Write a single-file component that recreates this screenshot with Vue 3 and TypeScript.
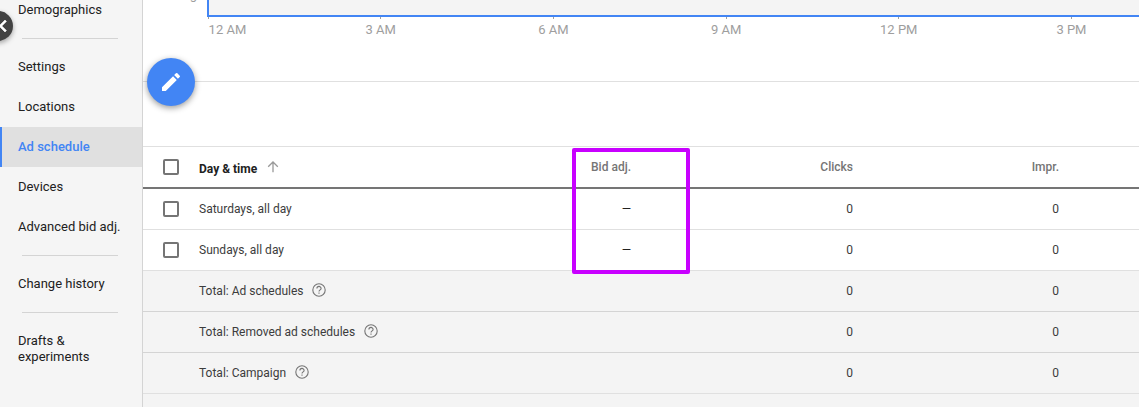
<script setup lang="ts">
interface Row {
  label: string
  bid: string
  total: boolean
}

const hours: string[] = ['12 AM', '3 AM', '6 AM', '9 AM', '12 PM', '3 PM']

const rows: Row[] = [
  { label: 'Saturdays, all day', bid: '—', total: false },
  { label: 'Sundays, all day', bid: '—', total: false },
  { label: 'Total: Ad schedules', bid: '', total: true },
  { label: 'Total: Removed ad schedules', bid: '', total: true },
  { label: 'Total: Campaign', bid: '', total: true },
]

const groups: string[][] = [
  ['Demographics'],
  ['Settings', 'Locations', 'Ad schedule', 'Devices', 'Advanced bid adj.'],
  ['Change history'],
  ['Drafts & experiments'],
]
</script>

<template>
  <div class="app">
    <nav class="side">
      <div v-for="(group, g) in groups" :key="g" class="group">
        <a v-for="item in group" :key="item" class="item" :class="{ active: item === 'Ad schedule' }">
          <span>{{ item }}</span>
        </a>
      </div>
    </nav>
    <button class="collapse" aria-label="Collapse">
      <svg width="24" height="24" viewBox="0 0 24 24"><path d="M15.41 7.41 14 6l-6 6 6 6 1.41-1.41L10.83 12z" fill="#fff" stroke="#fff" stroke-width=".6" /></svg>
    </button>

    <main class="main">
      <section class="chart">
        <div class="body">
          <div class="metric"><span>g</span></div>
          <div class="plot"></div>
        </div>
        <div class="axis">
          <div v-for="h in hours" :key="h" class="hour"><i></i><span>{{ h }}</span></div>
        </div>
      </section>
      <div class="toolbar"></div>

      <section class="table">
        <div class="row head">
          <div class="check"><i class="box"></i></div>
          <div class="name">
            <span>Day &amp; time</span>
            <svg class="arrow" width="12" height="12" viewBox="0 0 12 12"><path d="M6 11.3V1.4M1.2 5.8 6 1l4.8 4.8" fill="none" stroke="#999" stroke-width="1.3" /></svg>
          </div>
          <div class="bid">Bid adj.</div>
          <div class="clicks">Clicks</div>
          <div class="impr">Impr.</div>
        </div>
        <div v-for="row in rows" :key="row.label" class="row" :class="{ total: row.total }">
          <div class="check"><i v-if="!row.total" class="box"></i></div>
          <div class="name">
            <span>{{ row.label }}</span>
            <svg v-if="row.total" class="help" width="14" height="14" viewBox="0 0 14 14" fill="none" stroke="#757575"><circle cx="7" cy="7" r="6.2" stroke-width="1.1" /><path d="M4.9 5.5a2.1 2.1 0 0 1 4.2 0c0 1.4-2.1 1.5-2.1 3.1M7 9.6v1.2" stroke-width="1.1" /></svg>
          </div>
          <div class="bid dash">{{ row.bid }}</div>
          <div class="clicks">0</div>
          <div class="impr">0</div>
        </div>
      </section>
    </main>

    <button class="fab" aria-label="Edit">
      <svg width="24" height="24" viewBox="0 0 24 24"><path fill="#fff" d="M3 17.25V21h3.75L17.81 9.94l-3.75-3.75L3 17.25zM20.71 7.04a1 1 0 0 0 0-1.41l-2.34-2.34a1 1 0 0 0-1.41 0l-1.83 1.83 3.75 3.75 1.83-1.83z" /></svg>
    </button>
    <div class="highlight"></div>
  </div>
</template>

<style>
body {
  margin: 0;
  overflow: hidden;
}
</style>

<style scoped>
.app {
  position: relative;
  display: flex;
  width: 1139px;
  height: 407px;
  overflow: hidden;
  background: #fff;
  font-family: Roboto, sans-serif;
  color: #3c3c3c;
}
.side {
  flex: none;
  width: 142px;
  height: 407px;
  margin-top: -10px;
  padding-bottom: 10px;
  border-right: 1px solid #d4d4d4;
  background: #f5f5f5;
}
.group + .group::before {
  content: '';
  display: block;
  width: 96px;
  height: 1px;
  margin: 8px 0 8px 22px;
  background: #d4d4d4;
}
.item {
  display: flex;
  align-items: center;
  box-sizing: border-box;
  min-height: 40px;
  padding: 12px 18px 12px 18px;
  font-size: 13px;
  line-height: 16px;
  color: #212121;
}
.item.active {
  padding-left: 16px;
  border-left: 2px solid #4285f4;
  background: #e0e0e0;
  color: #4285f4;
  font-weight: 500;
}
.collapse,
.fab {
  position: absolute;
  display: flex;
  align-items: center;
  justify-content: center;
  padding: 0;
  border: 0;
  border-radius: 50%;
}
.collapse {
  left: -17px;
  top: 11px;
  width: 30px;
  height: 30px;
  background: #424242;
  box-shadow: 0 2px 5px rgba(0, 0, 0, 0.35);
}
.collapse svg {
  flex: none;
  margin-left: 10px;
}
.fab {
  left: 147px;
  top: 58px;
  width: 48px;
  height: 48px;
  background: #4285f4;
  box-shadow: 0 2px 6px rgba(0, 0, 0, 0.4);
}
.main {
  flex: 1;
  min-width: 0;
  overflow: hidden;
}
.chart {
  box-sizing: border-box;
  height: 82px;
  border-bottom: 1px solid #e0e0e0;
}
.body {
  display: flex;
  height: 17px;
}
.metric {
  width: 64px;
  text-align: right;
  font-size: 13px;
  line-height: 16px;
  color: #9e9e9e;
}
.metric span {
  display: block;
  margin: -13px 10px 0 0;
}
.plot {
  box-sizing: border-box;
  flex: 1;
  border-left: 2px solid #4285f4;
  border-bottom: 2px solid #4285f4;
  background: #f4f4f4;
}
.axis {
  display: flex;
  padding-left: 65px;
}
.hour {
  display: flex;
  flex: none;
  flex-direction: column;
  align-items: center;
  width: 172.7px;
  font-size: 13px;
  line-height: 16px;
  color: #9e9e9e;
}
.hour:first-child {
  align-items: flex-start;
  width: 86.35px;
}
.hour:first-child span {
  margin-left: 0.6px;
}
.hour i {
  width: 1px;
  height: 2px;
  margin-bottom: 3px;
  background: #9e9e9e;
}
.toolbar {
  height: 64px;
}
.row {
  display: grid;
  grid-template-columns: 56px 332px 100px 222px 206px;
  align-items: center;
  box-sizing: border-box;
  height: 41px;
  border-bottom: 1px solid #e0e0e0;
  font-size: 12px;
  line-height: 16px;
}
.head {
  height: 43px;
  border-top: 1px solid #e0e0e0;
  border-bottom: 2px solid #757575;
  color: #757575;
  font-weight: 500;
}
.row.total {
  border-bottom-color: #d4d4d4;
  background: #f4f4f4;
}
.row.total:last-child {
  border-bottom-color: #e0e0e0;
}
.table {
  height: 261px;
  background: #f4f4f4;
}
.row:not(.total) {
  background: #fff;
}
.check {
  display: flex;
  padding-left: 20px;
}
.box {
  box-sizing: border-box;
  width: 16px;
  height: 16px;
  border: 2px solid #757575;
  border-radius: 2px;
}
.name {
  display: flex;
  align-items: center;
}
.head .name {
  padding-top: 3px;
  color: #212121;
  font-weight: 700;
}
.arrow {
  margin: -3px 0 0 10px;
}
.help {
  margin: -2px 0 0 8.6px;
}
.bid,
.clicks,
.impr {
  text-align: right;
}
.dash {
  color: #212121;
}
.highlight {
  position: absolute;
  box-sizing: border-box;
  left: 572px;
  top: 148px;
  width: 118px;
  height: 126px;
  border: 4px solid #c800ff;
  border-radius: 2px;
}
</style>
